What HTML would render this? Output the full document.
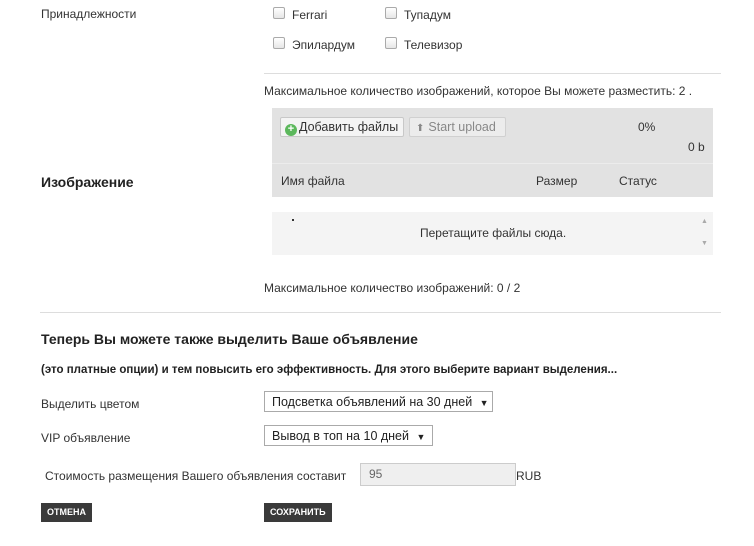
<!DOCTYPE html>
<html><head><meta charset="utf-8"><style>
body{margin:0;width:754px;height:546px;background:#fff;font-family:"Liberation Sans","DejaVu Sans",sans-serif;font-size:12px;color:#333;position:relative;overflow:hidden}
.a{position:absolute;white-space:nowrap}
.cb{position:absolute;width:10px;height:10px;border:1px solid #aaa;border-radius:2px;background:linear-gradient(#fff,#e6e6e6)}
.btn{position:absolute;background:#3a3a3a;color:#fff;font-size:9px;font-weight:bold;padding:0 6px;height:19px;line-height:19px}
.sel{position:absolute;border:1px solid #aaa;background:#fff;height:21px;line-height:21px;padding-left:7px;font-size:12.5px;color:#222;box-sizing:border-box}
</style></head><body>
<div class="a" style="left:41px;top:7px">Принадлежности</div>
<div class="cb" style="left:273px;top:7px"></div><div class="a" style="left:292px;top:8px">Ferrari</div>
<div class="cb" style="left:385px;top:7px"></div><div class="a" style="left:404px;top:8px">Тупадум</div>
<div class="cb" style="left:273px;top:37px"></div><div class="a" style="left:292px;top:38px">Эпилардум</div>
<div class="cb" style="left:385px;top:37px"></div><div class="a" style="left:404px;top:38px">Телевизор</div>
<div class="a" style="left:264px;top:73px;width:457px;height:1px;background:#ddd"></div>
<div class="a" style="left:264px;top:84px">Максимальное количество изображений, которое Вы можете разместить: 2 .</div>
<div class="a" style="left:41px;top:174px;font-size:14px;font-weight:bold;color:#222">Изображение</div>
<div class="a" style="left:272px;top:108px;width:441px;height:89px;background:#e2e2e2"></div>
<div class="a" style="left:272px;top:163px;width:441px;height:1px;background:#ececec"></div>
<div class="a" style="left:280px;top:117px;width:122px;height:18px;border:1px solid #c8c8c8;border-radius:2px;background:#f4f4f4;font-size:12.5px;line-height:18px;color:#333"><span style="display:inline-block;width:12px;height:12px;border-radius:50%;background:#5cb85c;vertical-align:-1px;margin:0 2px 0 4px;color:#fff;font-size:11px;line-height:11px;text-align:center;font-weight:bold">+</span>Добавить файлы</div>
<div class="a" style="left:409px;top:117px;width:95px;height:18px;border:1px solid #d0d0d0;border-radius:2px;background:#ececec;font-size:12.5px;line-height:18px;color:#888"><span style="margin:0 4px 0 6px;font-size:10px">⬆</span>Start upload</div>
<div class="a" style="left:638px;top:120px">0%</div>
<div class="a" style="left:688px;top:140px">0 b</div>
<div class="a" style="left:281px;top:174px">Имя файла</div>
<div class="a" style="left:536px;top:174px">Размер</div>
<div class="a" style="left:619px;top:174px">Статус</div>
<div class="a" style="left:272px;top:212px;width:441px;height:43px;background:#f4f4f4"></div>
<div class="a" style="left:292px;top:219px;width:2px;height:2px;background:#333"></div>
<div class="a" style="left:420px;top:226px">Перетащите файлы сюда.</div>
<div class="a" style="left:701px;top:218px;font-size:7px;color:#aaa">▲</div>
<div class="a" style="left:701px;top:240px;font-size:7px;color:#aaa">▼</div>
<div class="a" style="left:264px;top:281px">Максимальное количество изображений: 0 / 2</div>
<div class="a" style="left:40px;top:312px;width:681px;height:1px;background:#ddd"></div>
<div class="a" style="left:41px;top:331px;font-size:14px;font-weight:bold;color:#222">Теперь Вы можете также выделить Ваше объявление</div>
<div class="a" style="left:41px;top:364px;font-size:11.5px;font-weight:bold;color:#222">(это платные опции) и тем повысить его эффективность. Для этого выберите вариант выделения...</div>
<div class="a" style="left:41px;top:397px">Выделить цветом</div>
<div class="sel" style="left:264px;top:391px;width:229px">Подсветка объявлений на 30 дней <span style="font-size:9px;margin-left:4px">▼</span></div>
<div class="a" style="left:41px;top:431px">VIP объявление</div>
<div class="sel" style="left:264px;top:425px;width:169px">Вывод в топ на 10 дней <span style="font-size:9px;margin-left:4px">▼</span></div>
<div class="a" style="left:45px;top:469px">Стоимость размещения Вашего объявления составит</div>
<div class="a" style="left:360px;top:463px;width:156px;height:23px;border:1px solid #ccc;background:#efefef;box-sizing:border-box;padding-left:8px;line-height:21px;color:#666">95</div>
<div class="a" style="left:516px;top:469px">RUB</div>
<div class="btn" style="left:41px;top:503px">ОТМЕНА</div>
<div class="btn" style="left:264px;top:503px">СОХРАНИТЬ</div>
</body></html>
